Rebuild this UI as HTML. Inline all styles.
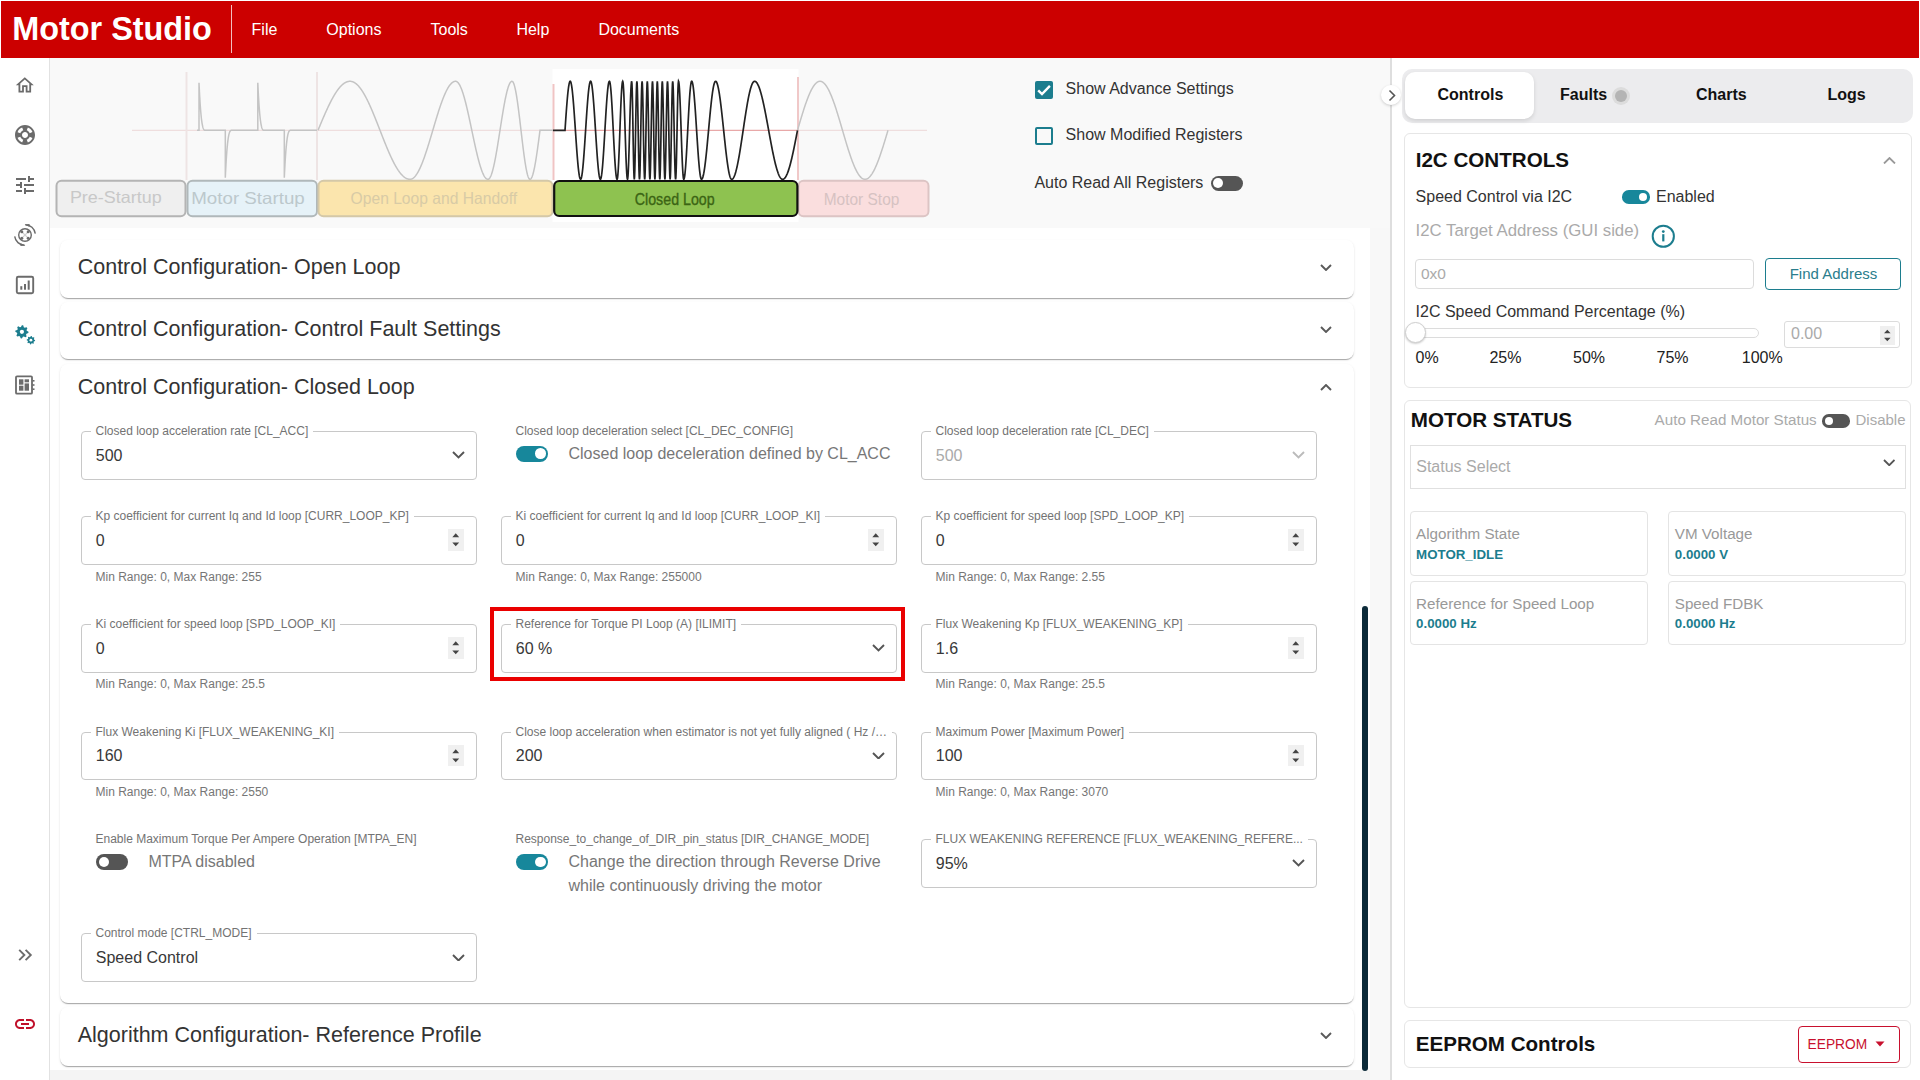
<!DOCTYPE html>
<html><head><meta charset="utf-8"><title>Motor Studio</title>
<style>
html,body{margin:0;padding:0;width:1920px;height:1080px;overflow:hidden;background:#fff;font-family:"Liberation Sans",sans-serif}
.t{position:absolute;line-height:1;white-space:nowrap}
.r{position:absolute;display:block}
svg text{font-family:"Liberation Sans",sans-serif}
</style></head><body>
<div class="r" style="left:1.00px;top:1.00px;width:1918.00px;height:57.00px;background:#cc0000"></div>
<div class="t" style="left:12.20px;top:13.37px;font-size:32.4px;color:#fff;font-weight:700;">Motor Studio</div>
<div class="r" style="left:231.00px;top:5.00px;width:1.00px;height:48.00px;background:rgba(255,255,255,0.75)"></div>
<div class="t" style="left:251.60px;top:22.25px;font-size:16px;color:#fff;font-weight:400;">File</div>
<div class="t" style="left:326.30px;top:22.25px;font-size:16px;color:#fff;font-weight:400;">Options</div>
<div class="t" style="left:430.50px;top:22.25px;font-size:16px;color:#fff;font-weight:400;">Tools</div>
<div class="t" style="left:516.40px;top:22.25px;font-size:16px;color:#fff;font-weight:400;">Help</div>
<div class="t" style="left:598.40px;top:22.25px;font-size:16px;color:#fff;font-weight:400;">Documents</div>
<div class="r" style="left:49.00px;top:58.00px;width:1.00px;height:1022.00px;background:#e2e2e2"></div>
<div class="r" style="left:50.00px;top:58.00px;width:1340.00px;height:170.00px;background:#f9f9f9"></div>
<div class="r" style="left:50.00px;top:228.00px;width:1320.00px;height:842.00px;background:#fff"></div>
<div class="r" style="left:1370.00px;top:228.00px;width:20.00px;height:852.00px;background:#f8f8f8"></div>
<div class="r" style="left:50.00px;top:1070.00px;width:1320.00px;height:10.00px;background:#f4f4f4"></div>
<svg class="r" style="left:0;top:0" width="1400" height="240" viewBox="0 0 1400 240"><rect x="552.5" y="69" width="246" height="153" fill="#ffffff"/><line x1="132" y1="130.3" x2="553" y2="130.3" stroke="#efdede" stroke-width="1.3"/><line x1="553" y1="130.3" x2="798" y2="130.3" stroke="#e8a8a8" stroke-width="1.3"/><line x1="798" y1="130.3" x2="927" y2="130.3" stroke="#efdede" stroke-width="1.3"/><line x1="186.5" y1="72" x2="186.5" y2="180" stroke="#eee4e4" stroke-width="2"/><line x1="317" y1="72" x2="317" y2="180" stroke="#eee4e4" stroke-width="2"/><line x1="553.5" y1="84" x2="553.5" y2="180" stroke="#f0c4c4" stroke-width="2"/><line x1="798" y1="77" x2="798" y2="180" stroke="#f0c8c8" stroke-width="2"/><path d="M197.00,130.30 L199.00,130.30 L199.00,82.80 L199.22,87.39 L199.43,91.68 L199.65,95.67 L199.87,99.38 L200.08,102.81 L200.30,105.98 L200.52,108.90 L200.73,111.57 L200.95,114.01 L201.17,116.23 L201.38,118.23 L201.60,120.04 L201.82,121.66 L202.03,123.09 L202.25,124.36 L202.47,125.47 L202.68,126.43 L202.90,127.26 L203.12,127.96 L203.33,128.54 L203.55,129.02 L203.77,129.40 L203.98,129.70 L204.20,129.92 L204.42,130.08 L204.63,130.19 L204.85,130.25 L205.07,130.29 L205.28,130.30 L205.50,130.30 L225.30,130.30 L225.30,177.80 L225.52,173.21 L225.73,168.92 L225.95,164.93 L226.17,161.22 L226.38,157.79 L226.60,154.62 L226.82,151.70 L227.03,149.03 L227.25,146.59 L227.47,144.37 L227.68,142.37 L227.90,140.56 L228.12,138.94 L228.33,137.51 L228.55,136.24 L228.77,135.13 L228.98,134.17 L229.20,133.34 L229.42,132.64 L229.63,132.06 L229.85,131.58 L230.07,131.20 L230.28,130.90 L230.50,130.68 L230.72,130.52 L230.93,130.41 L231.15,130.35 L231.37,130.31 L231.58,130.30 L231.80,130.30 L257.80,130.30 L257.80,82.80 L258.02,87.39 L258.23,91.68 L258.45,95.67 L258.67,99.38 L258.88,102.81 L259.10,105.98 L259.32,108.90 L259.53,111.57 L259.75,114.01 L259.97,116.23 L260.18,118.23 L260.40,120.04 L260.62,121.66 L260.83,123.09 L261.05,124.36 L261.27,125.47 L261.48,126.43 L261.70,127.26 L261.92,127.96 L262.13,128.54 L262.35,129.02 L262.57,129.40 L262.78,129.70 L263.00,129.92 L263.22,130.08 L263.43,130.19 L263.65,130.25 L263.87,130.29 L264.08,130.30 L264.30,130.30 L284.30,130.30 L284.30,177.80 L284.52,173.21 L284.73,168.92 L284.95,164.93 L285.17,161.22 L285.38,157.79 L285.60,154.62 L285.82,151.70 L286.03,149.03 L286.25,146.59 L286.47,144.37 L286.68,142.37 L286.90,140.56 L287.12,138.94 L287.33,137.51 L287.55,136.24 L287.77,135.13 L287.98,134.17 L288.20,133.34 L288.42,132.64 L288.63,132.06 L288.85,131.58 L289.07,131.20 L289.28,130.90 L289.50,130.68 L289.72,130.52 L289.93,130.41 L290.15,130.35 L290.37,130.31 L290.58,130.30 L290.80,130.30 L317.00,130.30" fill="none" stroke="#c4c4c4" stroke-width="1.5"/><path d="M318.00,130.30 L318.25,129.70 L318.50,129.10 L318.75,128.50 L319.00,127.90 L319.25,127.30 L319.50,126.70 L319.75,126.10 L320.00,125.50 L320.25,124.90 L320.50,124.30 L320.75,123.71 L321.00,123.11 L321.25,122.52 L321.50,121.92 L321.75,121.33 L322.00,120.74 L322.25,120.15 L322.50,119.56 L322.75,118.98 L323.00,118.39 L323.25,117.81 L323.50,117.23 L323.75,116.65 L324.00,116.08 L324.25,115.50 L324.50,114.93 L324.75,114.36 L325.00,113.79 L325.25,113.23 L325.50,112.67 L325.75,112.11 L326.00,111.55 L326.25,110.99 L326.50,110.44 L326.75,109.89 L327.00,109.35 L327.25,108.81 L327.50,108.27 L327.75,107.73 L328.00,107.20 L328.25,106.67 L328.50,106.15 L328.75,105.63 L329.00,105.11 L329.25,104.60 L329.50,104.09 L329.75,103.58 L330.00,103.08 L330.25,102.58 L330.50,102.09 L330.75,101.60 L331.00,101.11 L331.25,100.63 L331.50,100.15 L331.75,99.68 L332.00,99.21 L332.25,98.75 L332.50,98.29 L332.75,97.84 L333.00,97.39 L333.25,96.95 L333.50,96.51 L333.75,96.08 L334.00,95.65 L334.25,95.23 L334.50,94.81 L334.75,94.40 L335.00,93.99 L335.25,93.59 L335.50,93.20 L335.75,92.81 L336.00,92.42 L336.25,92.04 L336.50,91.67 L336.75,91.30 L337.00,90.94 L337.25,90.59 L337.50,90.24 L337.75,89.90 L338.00,89.56 L338.25,89.23 L338.50,88.90 L338.75,88.58 L339.00,88.27 L339.25,87.97 L339.50,87.67 L339.75,87.37 L340.00,87.09 L340.25,86.81 L340.50,86.53 L340.75,86.26 L341.00,86.00 L341.25,85.75 L341.50,85.50 L341.75,85.26 L342.00,85.03 L342.25,84.80 L342.50,84.58 L342.75,84.37 L343.00,84.16 L343.25,83.97 L343.50,83.77 L343.75,83.59 L344.00,83.41 L344.25,83.24 L344.50,83.07 L344.75,82.92 L345.00,82.77 L345.25,82.63 L345.50,82.49 L345.75,82.36 L346.00,82.24 L346.25,82.13 L346.50,82.02 L346.75,81.92 L347.00,81.83 L347.25,81.75 L347.50,81.67 L347.75,81.60 L348.00,81.54 L348.25,81.48 L348.50,81.43 L348.75,81.39 L349.00,81.36 L349.25,81.33 L349.50,81.31 L349.75,81.30 L350.00,81.30 L350.25,81.30 L350.50,81.32 L350.75,81.34 L351.00,81.37 L351.25,81.40 L351.50,81.45 L351.75,81.51 L352.00,81.57 L352.25,81.64 L352.50,81.72 L352.75,81.81 L353.00,81.90 L353.25,82.01 L353.50,82.12 L353.75,82.24 L354.00,82.37 L354.25,82.51 L354.50,82.65 L354.75,82.81 L355.00,82.97 L355.25,83.14 L355.50,83.32 L355.75,83.50 L356.00,83.70 L356.25,83.90 L356.50,84.11 L356.75,84.33 L357.00,84.55 L357.25,84.79 L357.50,85.03 L357.75,85.28 L358.00,85.54 L358.25,85.80 L358.50,86.07 L358.75,86.35 L359.00,86.64 L359.25,86.94 L359.50,87.24 L359.75,87.55 L360.00,87.86 L360.25,88.19 L360.50,88.52 L360.75,88.86 L361.00,89.21 L361.25,89.56 L361.50,89.92 L361.75,90.28 L362.00,90.66 L362.25,91.04 L362.50,91.43 L362.75,91.82 L363.00,92.22 L363.25,92.63 L363.50,93.04 L363.75,93.46 L364.00,93.89 L364.25,94.32 L364.50,94.76 L364.75,95.20 L365.00,95.65 L365.25,96.11 L365.50,96.57 L365.75,97.04 L366.00,97.51 L366.25,97.99 L366.50,98.48 L366.75,98.97 L367.00,99.46 L367.25,99.96 L367.50,100.47 L367.75,100.98 L368.00,101.50 L368.25,102.02 L368.50,102.55 L368.75,103.08 L369.00,103.61 L369.25,104.15 L369.50,104.70 L369.75,105.25 L370.00,105.80 L370.25,106.36 L370.50,106.92 L370.75,107.48 L371.00,108.05 L371.25,108.63 L371.50,109.20 L371.75,109.79 L372.00,110.37 L372.25,110.96 L372.50,111.55 L372.75,112.14 L373.00,112.74 L373.25,113.34 L373.50,113.94 L373.75,114.55 L374.00,115.16 L374.25,115.77 L374.50,116.38 L374.75,117.00 L375.00,117.62 L375.25,118.24 L375.50,118.86 L375.75,119.49 L376.00,120.11 L376.25,120.74 L376.50,121.37 L376.75,122.00 L377.00,122.63 L377.25,123.27 L377.50,123.90 L377.75,124.54 L378.00,125.18 L378.25,125.82 L378.50,126.46 L378.75,127.10 L379.00,127.74 L379.25,128.38 L379.50,129.02 L379.75,129.66 L380.00,130.30 L380.25,130.94 L380.50,131.58 L380.75,132.22 L381.00,132.86 L381.25,133.50 L381.50,134.14 L381.75,134.78 L382.00,135.42 L382.25,136.06 L382.50,136.70 L382.75,137.33 L383.00,137.97 L383.25,138.60 L383.50,139.23 L383.75,139.86 L384.00,140.49 L384.25,141.11 L384.50,141.74 L384.75,142.36 L385.00,142.98 L385.25,143.60 L385.50,144.22 L385.75,144.83 L386.00,145.44 L386.25,146.05 L386.50,146.66 L386.75,147.26 L387.00,147.86 L387.25,148.46 L387.50,149.05 L387.75,149.64 L388.00,150.23 L388.25,150.81 L388.50,151.40 L388.75,151.97 L389.00,152.55 L389.25,153.12 L389.50,153.68 L389.75,154.24 L390.00,154.80 L390.25,155.35 L390.50,155.90 L390.75,156.45 L391.00,156.99 L391.25,157.52 L391.50,158.05 L391.75,158.58 L392.00,159.10 L392.25,159.62 L392.50,160.13 L392.75,160.64 L393.00,161.14 L393.25,161.63 L393.50,162.12 L393.75,162.61 L394.00,163.09 L394.25,163.56 L394.50,164.03 L394.75,164.49 L395.00,164.95 L395.25,165.40 L395.50,165.84 L395.75,166.28 L396.00,166.71 L396.25,167.14 L396.50,167.56 L396.75,167.97 L397.00,168.38 L397.25,168.78 L397.50,169.17 L397.75,169.56 L398.00,169.94 L398.25,170.32 L398.50,170.68 L398.75,171.04 L399.00,171.39 L399.25,171.74 L399.50,172.08 L399.75,172.41 L400.00,172.74 L400.25,173.05 L400.50,173.36 L400.75,173.66 L401.00,173.96 L401.25,174.25 L401.50,174.53 L401.75,174.80 L402.00,175.06 L402.25,175.32 L402.50,175.57 L402.75,175.81 L403.00,176.05 L403.25,176.27 L403.50,176.49 L403.75,176.70 L404.00,176.90 L404.25,177.10 L404.50,177.28 L404.75,177.46 L405.00,177.63 L405.25,177.79 L405.50,177.95 L405.75,178.09 L406.00,178.23 L406.25,178.36 L406.50,178.48 L406.75,178.59 L407.00,178.70 L407.25,178.79 L407.50,178.88 L407.75,178.96 L408.00,179.03 L408.25,179.09 L408.50,179.15 L408.75,179.20 L409.00,179.23 L409.25,179.26 L409.50,179.28 L409.75,179.30 L410.00,179.30 L410.25,179.29 L410.50,179.27 L410.75,179.23 L411.00,179.18 L411.25,179.12 L411.50,179.04 L411.75,178.94 L412.00,178.83 L412.25,178.71 L412.51,178.57 L412.76,178.42 L413.01,178.25 L413.26,178.07 L413.51,177.88 L413.76,177.67 L414.01,177.44 L414.26,177.21 L414.51,176.95 L414.76,176.69 L415.01,176.41 L415.26,176.12 L415.51,175.81 L415.76,175.49 L416.01,175.15 L416.26,174.81 L416.51,174.45 L416.76,174.07 L417.02,173.69 L417.27,173.29 L417.52,172.88 L417.77,172.45 L418.02,172.01 L418.27,171.56 L418.52,171.10 L418.77,170.63 L419.02,170.14 L419.27,169.64 L419.52,169.13 L419.77,168.61 L420.02,168.08 L420.27,167.53 L420.52,166.98 L420.77,166.41 L421.02,165.83 L421.27,165.25 L421.53,164.65 L421.78,164.04 L422.03,163.42 L422.28,162.79 L422.53,162.16 L422.78,161.51 L423.03,160.85 L423.28,160.19 L423.53,159.51 L423.78,158.83 L424.03,158.14 L424.28,157.43 L424.53,156.73 L424.78,156.01 L425.03,155.29 L425.28,154.56 L425.53,153.82 L425.78,153.07 L426.04,152.32 L426.29,151.56 L426.54,150.80 L426.79,150.02 L427.04,149.25 L427.29,148.46 L427.54,147.68 L427.79,146.88 L428.04,146.08 L428.29,145.28 L428.54,144.47 L428.79,143.66 L429.04,142.85 L429.29,142.03 L429.54,141.20 L429.79,140.38 L430.04,139.55 L430.29,138.72 L430.55,137.88 L430.80,137.05 L431.05,136.21 L431.30,135.37 L431.55,134.52 L431.80,133.68 L432.05,132.84 L432.30,131.99 L432.55,131.15 L432.80,130.30 L433.05,129.45 L433.30,128.61 L433.55,127.76 L433.80,126.92 L434.05,126.08 L434.30,125.23 L434.55,124.39 L434.80,123.55 L435.05,122.72 L435.31,121.88 L435.56,121.05 L435.81,120.22 L436.06,119.40 L436.31,118.57 L436.56,117.75 L436.81,116.94 L437.06,116.13 L437.31,115.32 L437.56,114.52 L437.81,113.72 L438.06,112.92 L438.31,112.14 L438.56,111.35 L438.81,110.58 L439.06,109.80 L439.31,109.04 L439.56,108.28 L439.82,107.53 L440.07,106.78 L440.32,106.04 L440.57,105.31 L440.82,104.59 L441.07,103.87 L441.32,103.17 L441.57,102.46 L441.82,101.77 L442.07,101.09 L442.32,100.41 L442.57,99.75 L442.82,99.09 L443.07,98.44 L443.32,97.81 L443.57,97.18 L443.82,96.56 L444.07,95.95 L444.33,95.35 L444.58,94.77 L444.83,94.19 L445.08,93.62 L445.33,93.07 L445.58,92.52 L445.83,91.99 L446.08,91.47 L446.33,90.96 L446.58,90.46 L446.83,89.97 L447.08,89.50 L447.33,89.04 L447.58,88.59 L447.83,88.15 L448.08,87.72 L448.33,87.31 L448.58,86.91 L448.84,86.53 L449.09,86.15 L449.34,85.79 L449.59,85.45 L449.84,85.11 L450.09,84.79 L450.34,84.48 L450.59,84.19 L450.84,83.91 L451.09,83.65 L451.34,83.39 L451.59,83.16 L451.84,82.93 L452.09,82.72 L452.34,82.53 L452.59,82.35 L452.84,82.18 L453.09,82.03 L453.35,81.89 L453.60,81.77 L453.85,81.66 L454.10,81.56 L454.35,81.48 L454.60,81.42 L454.85,81.37 L455.10,81.33 L455.35,81.31 L455.60,81.30 L455.85,81.31 L456.10,81.36 L456.35,81.43 L456.60,81.53 L456.86,81.66 L457.11,81.82 L457.36,82.01 L457.61,82.23 L457.86,82.47 L458.11,82.75 L458.36,83.05 L458.61,83.38 L458.87,83.74 L459.12,84.12 L459.37,84.53 L459.62,84.97 L459.87,85.44 L460.12,85.93 L460.37,86.45 L460.62,87.00 L460.87,87.57 L461.13,88.17 L461.38,88.79 L461.63,89.43 L461.88,90.10 L462.13,90.80 L462.38,91.52 L462.63,92.26 L462.88,93.02 L463.13,93.81 L463.39,94.61 L463.64,95.44 L463.89,96.29 L464.14,97.16 L464.39,98.05 L464.64,98.96 L464.89,99.88 L465.14,100.83 L465.40,101.79 L465.65,102.77 L465.90,103.76 L466.15,104.77 L466.40,105.80 L466.65,106.84 L466.90,107.90 L467.15,108.96 L467.40,110.04 L467.66,111.14 L467.91,112.24 L468.16,113.35 L468.41,114.48 L468.66,115.61 L468.91,116.76 L469.16,117.91 L469.41,119.06 L469.67,120.23 L469.92,121.40 L470.17,122.58 L470.42,123.76 L470.67,124.94 L470.92,126.13 L471.17,127.32 L471.42,128.51 L471.67,129.70 L471.93,130.90 L472.18,132.09 L472.43,133.28 L472.68,134.47 L472.93,135.66 L473.18,136.84 L473.43,138.02 L473.68,139.20 L473.93,140.37 L474.19,141.54 L474.44,142.69 L474.69,143.84 L474.94,144.99 L475.19,146.12 L475.44,147.25 L475.69,148.36 L475.94,149.46 L476.20,150.56 L476.45,151.64 L476.70,152.70 L476.95,153.76 L477.20,154.80 L477.45,155.83 L477.70,156.84 L477.95,157.83 L478.20,158.81 L478.46,159.77 L478.71,160.72 L478.96,161.64 L479.21,162.55 L479.46,163.44 L479.71,164.31 L479.96,165.16 L480.21,165.99 L480.47,166.79 L480.72,167.58 L480.97,168.34 L481.22,169.08 L481.47,169.80 L481.72,170.50 L481.97,171.17 L482.22,171.81 L482.47,172.43 L482.73,173.03 L482.98,173.60 L483.23,174.15 L483.48,174.67 L483.73,175.16 L483.98,175.63 L484.23,176.07 L484.48,176.48 L484.73,176.86 L484.99,177.22 L485.24,177.55 L485.49,177.85 L485.74,178.13 L485.99,178.37 L486.24,178.59 L486.49,178.78 L486.74,178.94 L487.00,179.07 L487.25,179.17 L487.50,179.24 L487.75,179.29 L488.00,179.30 L488.25,179.27 L488.50,179.20 L488.75,179.06 L489.00,178.88 L489.25,178.65 L489.50,178.36 L489.75,178.02 L490.00,177.63 L490.25,177.19 L490.50,176.70 L490.75,176.16 L491.00,175.57 L491.25,174.93 L491.50,174.25 L491.75,173.51 L492.00,172.74 L492.25,171.91 L492.50,171.04 L492.75,170.13 L493.00,169.17 L493.25,168.18 L493.50,167.14 L493.75,166.06 L494.00,164.95 L494.25,163.80 L494.50,162.61 L494.75,161.39 L495.00,160.13 L495.25,158.84 L495.50,157.52 L495.75,156.18 L496.00,154.80 L496.25,153.40 L496.50,151.97 L496.75,150.52 L497.00,149.05 L497.25,147.56 L497.50,146.05 L497.75,144.52 L498.00,142.98 L498.25,141.43 L498.50,139.86 L498.75,138.28 L499.00,136.70 L499.25,135.10 L499.50,133.50 L499.75,131.90 L500.00,130.30 L500.25,128.70 L500.50,127.10 L500.75,125.50 L501.00,123.90 L501.25,122.32 L501.50,120.74 L501.75,119.17 L502.00,117.62 L502.25,116.08 L502.50,114.55 L502.75,113.04 L503.00,111.55 L503.25,110.08 L503.50,108.63 L503.75,107.20 L504.00,105.80 L504.25,104.42 L504.50,103.08 L504.75,101.76 L505.00,100.47 L505.25,99.21 L505.50,97.99 L505.75,96.80 L506.00,95.65 L506.25,94.54 L506.50,93.46 L506.75,92.42 L507.00,91.43 L507.25,90.47 L507.50,89.56 L507.75,88.69 L508.00,87.86 L508.25,87.09 L508.50,86.35 L508.75,85.67 L509.00,85.03 L509.25,84.44 L509.50,83.90 L509.75,83.41 L510.00,82.97 L510.25,82.58 L510.50,82.24 L510.75,81.95 L511.00,81.72 L511.25,81.54 L511.50,81.40 L511.75,81.33 L512.00,81.30 L512.25,81.35 L512.50,81.49 L512.75,81.72 L513.00,82.04 L513.25,82.46 L513.50,82.97 L513.75,83.57 L514.00,84.26 L514.25,85.03 L514.50,85.89 L514.75,86.84 L515.00,87.86 L515.25,88.97 L515.50,90.16 L515.75,91.43 L516.00,92.76 L516.25,94.17 L516.50,95.65 L516.75,97.20 L517.00,98.80 L517.25,100.47 L517.50,102.19 L517.75,103.97 L518.00,105.80 L518.25,107.67 L518.50,109.59 L518.75,111.55 L519.00,113.54 L519.25,115.57 L519.50,117.62 L519.75,119.69 L520.00,121.79 L520.25,123.90 L520.50,126.03 L520.75,128.16 L521.00,130.30 L521.25,132.44 L521.50,134.57 L521.75,136.70 L522.00,138.81 L522.25,140.91 L522.50,142.98 L522.75,145.03 L523.00,147.06 L523.25,149.05 L523.50,151.01 L523.75,152.93 L524.00,154.80 L524.25,156.63 L524.50,158.41 L524.75,160.13 L525.00,161.80 L525.25,163.40 L525.50,164.95 L525.75,166.43 L526.00,167.84 L526.25,169.17 L526.50,170.44 L526.75,171.63 L527.00,172.74 L527.25,173.76 L527.50,174.71 L527.75,175.57 L528.00,176.34 L528.25,177.03 L528.50,177.63 L528.75,178.14 L529.00,178.56 L529.25,178.88 L529.50,179.11 L529.75,179.25 L530.00,179.30 L530.25,179.26 L530.50,179.15 L530.75,178.96 L531.00,178.70 L531.25,178.36 L531.50,177.95 L531.75,177.46 L532.00,176.90 L532.25,176.27 L532.50,175.57 L532.75,174.80 L533.00,173.96 L533.25,173.05 L533.50,172.08 L533.75,171.04 L534.00,169.94 L534.25,168.78 L534.50,167.56 L534.75,166.28 L535.00,164.95 L535.25,163.56 L535.50,162.12 L535.75,160.64 L536.00,159.10 L536.25,157.52 L536.50,155.90 L536.75,154.24 L537.00,152.55 L537.25,150.81 L537.50,149.05 L537.75,147.26 L538.00,145.44 L538.25,143.60 L538.50,141.74 L538.75,139.86 L539.00,137.97 L539.25,136.06 L539.50,134.14 L539.75,132.22 L540.00,130.30 L553.00,130.30" fill="none" stroke="#c4c4c4" stroke-width="1.5"/><path d="M797.50,130.30 L797.75,129.44 L798.00,128.59 L798.25,127.74 L798.50,126.88 L798.75,126.03 L799.00,125.18 L799.25,124.33 L799.50,123.48 L799.75,122.63 L800.00,121.79 L800.25,120.95 L800.50,120.11 L800.75,119.28 L801.00,118.45 L801.25,117.62 L801.50,116.79 L801.75,115.97 L802.00,115.16 L802.25,114.35 L802.50,113.54 L802.75,112.74 L803.00,111.94 L803.25,111.15 L803.50,110.37 L803.75,109.59 L804.00,108.82 L804.25,108.05 L804.50,107.30 L804.75,106.54 L805.00,105.80 L805.25,105.06 L805.50,104.33 L805.75,103.61 L806.00,102.90 L806.25,102.19 L806.50,101.50 L806.75,100.81 L807.00,100.13 L807.25,99.46 L807.50,98.80 L807.75,98.15 L808.00,97.51 L808.25,96.88 L808.50,96.26 L808.75,95.65 L809.00,95.05 L809.25,94.46 L809.50,93.89 L809.75,93.32 L810.00,92.76 L810.25,92.22 L810.50,91.69 L810.75,91.17 L811.00,90.66 L811.25,90.16 L811.50,89.68 L811.75,89.21 L812.00,88.75 L812.25,88.30 L812.50,87.86 L812.75,87.44 L813.00,87.04 L813.25,86.64 L813.50,86.26 L813.75,85.89 L814.00,85.54 L814.25,85.20 L814.50,84.87 L814.75,84.55 L815.00,84.26 L815.25,83.97 L815.50,83.70 L815.75,83.44 L816.00,83.20 L816.25,82.97 L816.50,82.76 L816.75,82.56 L817.00,82.37 L817.25,82.20 L817.50,82.04 L817.75,81.90 L818.00,81.78 L818.25,81.67 L818.50,81.57 L818.75,81.49 L819.00,81.42 L819.25,81.37 L819.50,81.33 L819.75,81.31 L820.00,81.30 L820.25,81.31 L820.50,81.33 L820.75,81.37 L821.00,81.42 L821.25,81.49 L821.50,81.57 L821.75,81.67 L822.00,81.78 L822.25,81.90 L822.50,82.04 L822.75,82.20 L823.00,82.37 L823.25,82.56 L823.50,82.76 L823.75,82.97 L824.00,83.20 L824.25,83.44 L824.50,83.70 L824.75,83.97 L825.00,84.26 L825.25,84.55 L825.50,84.87 L825.75,85.20 L826.00,85.54 L826.25,85.89 L826.50,86.26 L826.75,86.64 L827.00,87.04 L827.25,87.44 L827.50,87.86 L827.75,88.30 L828.00,88.75 L828.25,89.21 L828.50,89.68 L828.75,90.16 L829.00,90.66 L829.25,91.17 L829.50,91.69 L829.75,92.22 L830.00,92.76 L830.25,93.32 L830.50,93.89 L830.75,94.46 L831.00,95.05 L831.25,95.65 L831.50,96.26 L831.75,96.88 L832.00,97.51 L832.25,98.15 L832.50,98.80 L832.75,99.46 L833.00,100.13 L833.25,100.81 L833.50,101.50 L833.75,102.19 L834.00,102.90 L834.25,103.61 L834.50,104.33 L834.75,105.06 L835.00,105.80 L835.25,106.54 L835.50,107.30 L835.75,108.05 L836.00,108.82 L836.25,109.59 L836.50,110.37 L836.75,111.15 L837.00,111.94 L837.25,112.74 L837.50,113.54 L837.75,114.35 L838.00,115.16 L838.25,115.97 L838.50,116.79 L838.75,117.62 L839.00,118.45 L839.25,119.28 L839.50,120.11 L839.75,120.95 L840.00,121.79 L840.25,122.63 L840.50,123.48 L840.75,124.33 L841.00,125.18 L841.25,126.03 L841.50,126.88 L841.75,127.74 L842.00,128.59 L842.25,129.44 L842.50,130.30 L842.75,131.16 L843.00,132.01 L843.25,132.86 L843.50,133.72 L843.75,134.57 L844.00,135.42 L844.25,136.27 L844.50,137.12 L844.75,137.97 L845.00,138.81 L845.25,139.65 L845.50,140.49 L845.75,141.32 L846.00,142.15 L846.25,142.98 L846.50,143.81 L846.75,144.63 L847.00,145.44 L847.25,146.25 L847.50,147.06 L847.75,147.86 L848.00,148.66 L848.25,149.45 L848.50,150.23 L848.75,151.01 L849.00,151.78 L849.25,152.55 L849.50,153.30 L849.75,154.06 L850.00,154.80 L850.25,155.54 L850.50,156.27 L850.75,156.99 L851.00,157.70 L851.25,158.41 L851.50,159.10 L851.75,159.79 L852.00,160.47 L852.25,161.14 L852.50,161.80 L852.75,162.45 L853.00,163.09 L853.25,163.72 L853.50,164.34 L853.75,164.95 L854.00,165.55 L854.25,166.14 L854.50,166.71 L854.75,167.28 L855.00,167.84 L855.25,168.38 L855.50,168.91 L855.75,169.43 L856.00,169.94 L856.25,170.44 L856.50,170.92 L856.75,171.39 L857.00,171.85 L857.25,172.30 L857.50,172.74 L857.75,173.16 L858.00,173.56 L858.25,173.96 L858.50,174.34 L858.75,174.71 L859.00,175.06 L859.25,175.40 L859.50,175.73 L859.75,176.05 L860.00,176.34 L860.25,176.63 L860.50,176.90 L860.75,177.16 L861.00,177.40 L861.25,177.63 L861.50,177.84 L861.75,178.04 L862.00,178.23 L862.25,178.40 L862.50,178.56 L862.75,178.70 L863.00,178.82 L863.25,178.93 L863.50,179.03 L863.75,179.11 L864.00,179.18 L864.25,179.23 L864.50,179.27 L864.75,179.29 L865.00,179.30 L865.25,179.29 L865.50,179.27 L865.75,179.24 L866.00,179.19 L866.25,179.12 L866.50,179.04 L866.75,178.95 L867.00,178.84 L867.25,178.72 L867.50,178.59 L867.75,178.44 L868.00,178.28 L868.25,178.10 L868.50,177.91 L868.75,177.70 L869.00,177.48 L869.25,177.25 L869.50,177.00 L869.75,176.74 L870.00,176.47 L870.25,176.18 L870.50,175.88 L870.75,175.57 L871.00,175.24 L871.25,174.90 L871.50,174.55 L871.75,174.18 L872.00,173.81 L872.25,173.42 L872.50,173.01 L872.75,172.60 L873.00,172.17 L873.25,171.73 L873.50,171.27 L873.75,170.81 L874.00,170.33 L874.25,169.84 L874.50,169.34 L874.75,168.83 L875.00,168.31 L875.25,167.78 L875.50,167.23 L875.75,166.68 L876.00,166.11 L876.25,165.53 L876.50,164.95 L876.75,164.35 L877.00,163.75 L877.25,163.13 L877.50,162.50 L877.75,161.87 L878.00,161.22 L878.25,160.57 L878.50,159.91 L878.75,159.24 L879.00,158.56 L879.25,157.87 L879.50,157.17 L879.75,156.47 L880.00,155.76 L880.25,155.04 L880.50,154.32 L880.75,153.58 L881.00,152.84 L881.25,152.10 L881.50,151.34 L881.75,150.59 L882.00,149.82 L882.25,149.05 L882.50,148.28 L882.75,147.49 L883.00,146.71 L883.25,145.92 L883.50,145.12 L883.75,144.32 L884.00,143.52 L884.25,142.71 L884.50,141.90 L884.75,141.09 L885.00,140.27 L885.25,139.45 L885.50,138.63 L885.75,137.80 L886.00,136.97 L886.25,136.14 L886.50,135.31 L886.75,134.48 L887.00,133.64 L887.25,132.81 L887.50,131.97 L887.75,131.14 L888.00,130.30" fill="none" stroke="#c4c4c4" stroke-width="1.5"/><path d="M553.00,130.30 L565.00,130.30 L565.00,130.30 L565.26,126.46 L565.52,122.63 L565.78,118.86 L566.04,115.16 L566.30,111.55 L566.56,108.05 L566.82,104.70 L567.08,101.50 L567.34,98.48 L567.60,95.65 L567.86,93.04 L568.12,90.66 L568.38,88.52 L568.64,86.64 L568.90,85.03 L569.16,83.70 L569.42,82.65 L569.68,81.90 L569.94,81.45 L570.20,81.30 L570.45,81.44 L570.71,81.87 L570.96,82.59 L571.21,83.58 L571.47,84.85 L571.72,86.39 L571.98,88.18 L572.23,90.22 L572.48,92.50 L572.74,94.99 L572.99,97.70 L573.24,100.59 L573.50,103.67 L573.75,106.89 L574.00,110.26 L574.26,113.74 L574.51,117.32 L574.77,120.97 L575.02,124.68 L575.27,128.42 L575.53,132.18 L575.78,135.92 L576.03,139.63 L576.29,143.28 L576.54,146.86 L576.80,150.34 L577.05,153.71 L577.30,156.93 L577.56,160.01 L577.81,162.90 L578.06,165.61 L578.32,168.10 L578.57,170.38 L578.82,172.42 L579.08,174.21 L579.33,175.75 L579.59,177.02 L579.84,178.01 L580.09,178.73 L580.35,179.16 L580.60,179.30 L580.85,179.15 L581.10,178.70 L581.35,177.95 L581.60,176.90 L581.85,175.57 L582.10,173.96 L582.35,172.08 L582.60,169.94 L582.85,167.56 L583.10,164.95 L583.35,162.12 L583.60,159.10 L583.85,155.90 L584.10,152.55 L584.35,149.05 L584.60,145.44 L584.85,141.74 L585.10,137.97 L585.35,134.14 L585.60,130.30 L585.85,126.46 L586.10,122.63 L586.35,118.86 L586.60,115.16 L586.85,111.55 L587.10,108.05 L587.35,104.70 L587.60,101.50 L587.85,98.48 L588.10,95.65 L588.35,93.04 L588.60,90.66 L588.85,88.52 L589.10,86.64 L589.35,85.03 L589.60,83.70 L589.85,82.65 L590.10,81.90 L590.35,81.45 L590.60,81.30 L590.85,81.46 L591.10,81.93 L591.35,82.72 L591.61,83.82 L591.86,85.22 L592.11,86.91 L592.36,88.89 L592.61,91.13 L592.86,93.62 L593.11,96.36 L593.36,99.31 L593.62,102.46 L593.87,105.80 L594.12,109.29 L594.37,112.92 L594.62,116.67 L594.87,120.50 L595.12,124.39 L595.37,128.33 L595.63,132.27 L595.88,136.21 L596.13,140.10 L596.38,143.93 L596.63,147.68 L596.88,151.31 L597.13,154.80 L597.38,158.14 L597.64,161.29 L597.89,164.24 L598.14,166.98 L598.39,169.47 L598.64,171.71 L598.89,173.69 L599.14,175.38 L599.39,176.78 L599.65,177.88 L599.90,178.67 L600.15,179.14 L600.40,179.30 L600.65,179.11 L600.90,178.56 L601.15,177.63 L601.40,176.34 L601.65,174.71 L601.90,172.74 L602.15,170.44 L602.40,167.84 L602.65,164.95 L602.90,161.80 L603.15,158.41 L603.40,154.80 L603.65,151.01 L603.90,147.06 L604.15,142.98 L604.40,138.81 L604.65,134.57 L604.90,130.30 L605.15,126.03 L605.40,121.79 L605.65,117.62 L605.90,113.54 L606.15,109.59 L606.40,105.80 L606.65,102.19 L606.90,98.80 L607.15,95.65 L607.40,92.76 L607.65,90.16 L607.90,87.86 L608.15,85.89 L608.40,84.26 L608.65,82.97 L608.90,82.04 L609.15,81.49 L609.40,81.30 L609.66,81.57 L609.91,82.37 L610.17,83.70 L610.43,85.54 L610.68,87.86 L610.94,90.66 L611.20,93.89 L611.45,97.51 L611.71,101.50 L611.97,105.80 L612.22,110.37 L612.48,115.16 L612.74,120.11 L612.99,125.18 L613.25,130.30 L613.51,135.42 L613.76,140.49 L614.02,145.44 L614.28,150.23 L614.53,154.80 L614.79,159.10 L615.05,163.09 L615.30,166.71 L615.56,169.94 L615.82,172.74 L616.07,175.06 L616.33,176.90 L616.59,178.23 L616.84,179.03 L617.10,179.30 L617.35,178.80 L617.61,177.32 L617.86,174.87 L618.12,171.52 L618.37,167.33 L618.63,162.39 L618.88,156.79 L619.14,150.66 L619.39,144.10 L619.65,137.27 L619.90,130.30 L620.15,123.33 L620.41,116.50 L620.66,109.94 L620.92,103.81 L621.17,98.21 L621.43,93.27 L621.68,89.08 L621.94,85.73 L622.19,83.28 L622.45,81.80 L622.70,81.30 L622.95,81.97 L623.21,83.95 L623.46,87.21 L623.71,91.63 L623.96,97.11 L624.22,103.50 L624.47,110.62 L624.72,118.27 L624.97,126.25 L625.23,134.35 L625.48,142.33 L625.73,149.98 L625.98,157.10 L626.24,163.49 L626.49,168.97 L626.74,173.39 L626.99,176.65 L627.25,178.63 L627.50,179.30 L627.76,178.36 L628.02,175.57 L628.29,171.04 L628.55,164.95 L628.81,157.52 L629.08,149.05 L629.34,139.86 L629.60,130.30 L629.86,120.74 L630.12,111.55 L630.39,103.08 L630.65,95.65 L630.91,89.56 L631.18,85.03 L631.44,82.24 L631.70,81.30 L631.96,83.70 L632.22,90.66 L632.48,101.50 L632.74,115.16 L633.00,130.30 L633.26,145.44 L633.52,159.10 L633.78,169.94 L634.04,176.90 L634.30,179.30 L634.56,176.90 L634.82,169.94 L635.08,159.10 L635.34,145.44 L635.60,130.30 L635.86,115.16 L636.12,101.50 L636.38,90.66 L636.64,83.70 L636.90,81.30 L637.16,83.70 L637.42,90.66 L637.68,101.50 L637.94,115.16 L638.20,130.30 L638.46,145.44 L638.72,159.10 L638.98,169.94 L639.24,176.90 L639.50,179.30 L639.76,176.90 L640.02,169.94 L640.28,159.10 L640.54,145.44 L640.80,130.30 L641.06,115.16 L641.32,101.50 L641.58,90.66 L641.84,83.70 L642.10,81.30 L642.36,83.70 L642.62,90.66 L642.88,101.50 L643.14,115.16 L643.40,130.30 L643.66,145.44 L643.92,159.10 L644.18,169.94 L644.44,176.90 L644.70,179.30 L644.96,176.90 L645.22,169.94 L645.48,159.10 L645.74,145.44 L646.00,130.30 L646.26,115.16 L646.52,101.50 L646.78,90.66 L647.04,83.70 L647.30,81.30 L647.56,83.70 L647.82,90.66 L648.08,101.50 L648.34,115.16 L648.60,130.30 L648.86,145.44 L649.12,159.10 L649.38,169.94 L649.64,176.90 L649.90,179.30 L650.16,176.90 L650.42,169.94 L650.68,159.10 L650.94,145.44 L651.20,130.30 L651.46,115.16 L651.72,101.50 L651.98,90.66 L652.24,83.70 L652.50,81.30 L652.77,84.26 L653.03,92.76 L653.30,105.80 L653.57,121.79 L653.83,138.81 L654.10,154.80 L654.37,167.84 L654.63,176.34 L654.90,179.30 L655.17,176.34 L655.43,167.84 L655.70,154.80 L655.97,138.81 L656.23,121.79 L656.50,105.80 L656.77,92.76 L657.03,84.26 L657.30,81.30 L657.55,83.70 L657.80,90.66 L658.05,101.50 L658.30,115.16 L658.55,130.30 L658.80,145.44 L659.05,159.10 L659.30,169.94 L659.55,176.90 L659.80,179.30 L660.05,176.90 L660.30,169.94 L660.55,159.10 L660.80,145.44 L661.05,130.30 L661.30,115.16 L661.55,101.50 L661.80,90.66 L662.05,83.70 L662.30,81.30 L662.56,83.70 L662.82,90.66 L663.08,101.50 L663.34,115.16 L663.60,130.30 L663.86,145.44 L664.12,159.10 L664.38,169.94 L664.64,176.90 L664.90,179.30 L665.16,176.90 L665.42,169.94 L665.68,159.10 L665.94,145.44 L666.20,130.30 L666.46,115.16 L666.72,101.50 L666.98,90.66 L667.24,83.70 L667.50,81.30 L667.76,83.70 L668.02,90.66 L668.28,101.50 L668.54,115.16 L668.80,130.30 L669.06,145.44 L669.32,159.10 L669.58,169.94 L669.84,176.90 L670.10,179.30 L670.36,176.90 L670.62,169.94 L670.88,159.10 L671.14,145.44 L671.40,130.30 L671.66,115.16 L671.92,101.50 L672.18,90.66 L672.44,83.70 L672.70,81.30 L672.96,83.28 L673.23,89.08 L673.49,98.21 L673.75,109.94 L674.02,123.33 L674.28,137.27 L674.55,150.66 L674.81,162.39 L675.07,171.52 L675.34,177.32 L675.60,179.30 L675.86,177.32 L676.13,171.52 L676.39,162.39 L676.65,150.66 L676.92,137.27 L677.18,123.33 L677.45,109.94 L677.71,98.21 L677.97,89.08 L678.24,83.28 L678.50,81.30 L678.75,81.85 L679.00,83.48 L679.25,86.15 L679.50,89.81 L679.75,94.38 L680.00,99.75 L680.25,105.80 L680.50,112.40 L680.75,119.40 L681.00,126.64 L681.25,133.96 L681.50,141.20 L681.75,148.20 L682.00,154.80 L682.25,160.85 L682.50,166.22 L682.75,170.79 L683.00,174.45 L683.25,177.12 L683.50,178.75 L683.75,179.30 L684.01,179.05 L684.26,178.30 L684.52,177.05 L684.78,175.33 L685.03,173.14 L685.29,170.52 L685.55,167.48 L685.80,164.06 L686.06,160.29 L686.31,156.22 L686.57,151.88 L686.83,147.32 L687.08,142.58 L687.34,137.72 L687.60,132.78 L687.85,127.82 L688.11,122.88 L688.37,118.02 L688.62,113.28 L688.88,108.72 L689.14,104.38 L689.39,100.31 L689.65,96.54 L689.90,93.12 L690.16,90.08 L690.42,87.46 L690.67,85.27 L690.93,83.55 L691.19,82.30 L691.44,81.55 L691.70,81.30 L691.95,81.46 L692.20,81.93 L692.45,82.72 L692.71,83.82 L692.96,85.22 L693.21,86.91 L693.46,88.89 L693.71,91.13 L693.96,93.62 L694.21,96.36 L694.46,99.31 L694.72,102.46 L694.97,105.80 L695.22,109.29 L695.47,112.92 L695.72,116.67 L695.97,120.50 L696.22,124.39 L696.47,128.33 L696.73,132.27 L696.98,136.21 L697.23,140.10 L697.48,143.93 L697.73,147.68 L697.98,151.31 L698.23,154.80 L698.48,158.14 L698.74,161.29 L698.99,164.24 L699.24,166.98 L699.49,169.47 L699.74,171.71 L699.99,173.69 L700.24,175.38 L700.49,176.78 L700.75,177.88 L701.00,178.67 L701.25,179.14 L701.50,179.30 L701.75,179.22 L702.00,178.99 L702.26,178.61 L702.51,178.07 L702.76,177.38 L703.01,176.55 L703.26,175.57 L703.51,174.45 L703.77,173.19 L704.02,171.79 L704.27,170.26 L704.52,168.61 L704.77,166.84 L705.02,164.95 L705.28,162.95 L705.53,160.85 L705.78,158.65 L706.03,156.37 L706.28,154.00 L706.54,151.56 L706.79,149.05 L707.04,146.48 L707.29,143.86 L707.54,141.20 L707.79,138.51 L708.05,135.79 L708.30,133.05 L708.55,130.30 L708.80,127.55 L709.05,124.81 L709.31,122.09 L709.56,119.40 L709.81,116.74 L710.06,114.12 L710.31,111.55 L710.56,109.04 L710.82,106.60 L711.07,104.23 L711.32,101.95 L711.57,99.75 L711.82,97.65 L712.08,95.65 L712.33,93.76 L712.58,91.99 L712.83,90.34 L713.08,88.81 L713.33,87.41 L713.59,86.15 L713.84,85.03 L714.09,84.05 L714.34,83.22 L714.59,82.53 L714.84,81.99 L715.10,81.61 L715.35,81.38 L715.60,81.30 L715.85,81.36 L716.10,81.54 L716.35,81.83 L716.61,82.24 L716.86,82.77 L717.11,83.41 L717.36,84.16 L717.61,85.03 L717.86,86.00 L718.12,87.09 L718.37,88.27 L718.62,89.56 L718.87,90.94 L719.12,92.42 L719.37,93.99 L719.62,95.65 L719.88,97.39 L720.13,99.21 L720.38,101.11 L720.63,103.08 L720.88,105.11 L721.13,107.20 L721.39,109.35 L721.64,111.55 L721.89,113.79 L722.14,116.08 L722.39,118.39 L722.64,120.74 L722.90,123.11 L723.15,125.50 L723.40,127.90 L723.65,130.30 L723.90,132.70 L724.15,135.10 L724.40,137.49 L724.66,139.86 L724.91,142.21 L725.16,144.52 L725.41,146.81 L725.66,149.05 L725.91,151.25 L726.17,153.40 L726.42,155.49 L726.67,157.52 L726.92,159.49 L727.17,161.39 L727.42,163.21 L727.68,164.95 L727.93,166.61 L728.18,168.18 L728.43,169.66 L728.68,171.04 L728.93,172.33 L729.18,173.51 L729.44,174.60 L729.69,175.57 L729.94,176.44 L730.19,177.19 L730.44,177.83 L730.69,178.36 L730.95,178.77 L731.20,179.06 L731.45,179.24 L731.70,179.30 L731.95,179.27 L732.20,179.18 L732.45,179.04 L732.71,178.83 L732.96,178.57 L733.21,178.25 L733.46,177.88 L733.71,177.44 L733.96,176.95 L734.22,176.41 L734.47,175.81 L734.72,175.15 L734.97,174.45 L735.22,173.69 L735.47,172.88 L735.73,172.01 L735.98,171.10 L736.23,170.14 L736.48,169.13 L736.73,168.08 L736.98,166.98 L737.24,165.83 L737.49,164.65 L737.74,163.42 L737.99,162.16 L738.24,160.85 L738.49,159.51 L738.75,158.14 L739.00,156.73 L739.25,155.29 L739.50,153.82 L739.75,152.32 L740.00,150.80 L740.26,149.25 L740.51,147.68 L740.76,146.08 L741.01,144.47 L741.26,142.85 L741.51,141.20 L741.77,139.55 L742.02,137.88 L742.27,136.21 L742.52,134.52 L742.77,132.84 L743.02,131.15 L743.28,129.45 L743.53,127.76 L743.78,126.08 L744.03,124.39 L744.28,122.72 L744.53,121.05 L744.79,119.40 L745.04,117.75 L745.29,116.13 L745.54,114.52 L745.79,112.92 L746.04,111.35 L746.30,109.80 L746.55,108.28 L746.80,106.78 L747.05,105.31 L747.30,103.87 L747.55,102.46 L747.81,101.09 L748.06,99.75 L748.31,98.44 L748.56,97.18 L748.81,95.95 L749.06,94.77 L749.32,93.62 L749.57,92.52 L749.82,91.47 L750.07,90.46 L750.32,89.50 L750.57,88.59 L750.83,87.72 L751.08,86.91 L751.33,86.15 L751.58,85.45 L751.83,84.79 L752.08,84.19 L752.34,83.65 L752.59,83.16 L752.84,82.72 L753.09,82.35 L753.34,82.03 L753.59,81.77 L753.85,81.56 L754.10,81.42 L754.35,81.33 L754.60,81.30 L754.85,81.32 L755.10,81.38 L755.35,81.47 L755.60,81.61 L755.85,81.78 L756.11,81.99 L756.36,82.24 L756.61,82.53 L756.86,82.85 L757.11,83.22 L757.36,83.61 L757.61,84.05 L757.86,84.52 L758.11,85.03 L758.36,85.57 L758.61,86.15 L758.87,86.77 L759.12,87.41 L759.37,88.10 L759.62,88.81 L759.87,89.56 L760.12,90.34 L760.37,91.15 L760.62,91.99 L760.87,92.86 L761.12,93.76 L761.37,94.69 L761.62,95.65 L761.88,96.64 L762.13,97.65 L762.38,98.69 L762.63,99.75 L762.88,100.84 L763.13,101.95 L763.38,103.08 L763.63,104.23 L763.88,105.40 L764.13,106.60 L764.38,107.81 L764.64,109.04 L764.89,110.29 L765.14,111.55 L765.39,112.83 L765.64,114.12 L765.89,115.42 L766.14,116.74 L766.39,118.06 L766.64,119.40 L766.89,120.74 L767.14,122.09 L767.40,123.45 L767.65,124.81 L767.90,126.18 L768.15,127.55 L768.40,128.93 L768.65,130.30 L768.90,131.67 L769.15,133.05 L769.40,134.42 L769.65,135.79 L769.90,137.15 L770.16,138.51 L770.41,139.86 L770.66,141.20 L770.91,142.54 L771.16,143.86 L771.41,145.18 L771.66,146.48 L771.91,147.77 L772.16,149.05 L772.41,150.31 L772.66,151.56 L772.92,152.79 L773.17,154.00 L773.42,155.20 L773.67,156.37 L773.92,157.52 L774.17,158.65 L774.42,159.76 L774.67,160.85 L774.92,161.91 L775.17,162.95 L775.42,163.96 L775.68,164.95 L775.93,165.91 L776.18,166.84 L776.43,167.74 L776.68,168.61 L776.93,169.45 L777.18,170.26 L777.43,171.04 L777.68,171.79 L777.93,172.50 L778.18,173.19 L778.43,173.83 L778.69,174.45 L778.94,175.03 L779.19,175.57 L779.44,176.08 L779.69,176.55 L779.94,176.99 L780.19,177.38 L780.44,177.75 L780.69,178.07 L780.94,178.36 L781.19,178.61 L781.45,178.82 L781.70,178.99 L781.95,179.13 L782.20,179.22 L782.45,179.28 L782.70,179.30 L782.95,179.28 L783.20,179.23 L783.45,179.14 L783.70,179.02 L783.95,178.87 L784.21,178.68 L784.46,178.45 L784.71,178.19 L784.96,177.90 L785.21,177.57 L785.46,177.21 L785.71,176.82 L785.96,176.39 L786.21,175.94 L786.46,175.44 L786.71,174.92 L786.96,174.37 L787.22,173.78 L787.47,173.16 L787.72,172.52 L787.97,171.84 L788.22,171.13 L788.47,170.40 L788.72,169.63 L788.97,168.84 L789.22,168.02 L789.47,167.18 L789.72,166.30 L789.97,165.41 L790.23,164.48 L790.48,163.54 L790.73,162.57 L790.98,161.57 L791.23,160.56 L791.48,159.52 L791.73,158.46 L791.98,157.39 L792.23,156.29 L792.48,155.18 L792.73,154.04 L792.98,152.89 L793.24,151.73 L793.49,150.55 L793.74,149.35 L793.99,148.14 L794.24,146.92 L794.49,145.69 L794.74,144.45 L794.99,143.19 L795.24,141.93 L795.49,140.66 L795.74,139.38 L795.99,138.09 L796.25,136.80 L796.50,135.51 L796.75,134.21 L797.00,132.91 L797.25,131.60 L797.50,130.30" fill="none" stroke="#222" stroke-width="1.7"/><rect x="56.5" y="180.8" width="129" height="35.4" rx="5" fill="#efefef" stroke="#b4b4b4" stroke-width="2"/><text x="69.9" y="202.7" font-size="16.5" fill="#c8c8c8" textLength="91.8" lengthAdjust="spacingAndGlyphs">Pre-Startup</text><rect x="187.5" y="180.8" width="129.5" height="35.4" rx="5" fill="#e6f2f8" stroke="#b0b8ba" stroke-width="2"/><text x="191.25" y="204.4" font-size="16.5" fill="#bcc8cc" textLength="113.5" lengthAdjust="spacingAndGlyphs">Motor Startup</text><rect x="318.5" y="180.8" width="234" height="35.4" rx="5" fill="#fbe5ad" stroke="#d4c8a8" stroke-width="2"/><text x="350.6" y="204.2" font-size="16.5" fill="#d8cba6" textLength="166.6" lengthAdjust="spacingAndGlyphs">Open Loop and Handoff</text><rect x="798.5" y="180.8" width="130" height="35.4" rx="5" fill="#fadede" stroke="#dcc4c4" stroke-width="2"/><text x="823.75" y="204.8" font-size="16.5" fill="#d6c2c2" textLength="75.6" lengthAdjust="spacingAndGlyphs">Motor Stop</text><rect x="554.2" y="181" width="243.2" height="35" rx="5" fill="#8ec250" stroke="#111" stroke-width="2.2"/><text x="634.8" y="204.8" font-size="16.5" fill="#3b6414" stroke="#3b6414" stroke-width="0.35" textLength="79.8" lengthAdjust="spacingAndGlyphs">Closed Loop</text></svg>
<svg class="r" style="left:1035px;top:80.5px" width="18" height="18" viewBox="0 0 18 18"><rect x="0" y="0" width="18" height="18" rx="2" fill="#1c7d8e"/><path d="M3.2 9.3 L7.0 13.0 L14.9 4.9" fill="none" stroke="#fff" stroke-width="2.4"/></svg>
<div class="t" style="left:1065.60px;top:81.05px;font-size:16px;color:#333;font-weight:400;">Show Advance Settings</div>
<div class="r" style="left:1035.00px;top:127.00px;width:18.00px;height:18.00px;border:2px solid #1c7d8e;border-radius:2px;box-sizing:border-box"></div>
<div class="t" style="left:1065.60px;top:127.45px;font-size:16px;color:#333;font-weight:400;">Show Modified Registers</div>
<div class="t" style="left:1034.40px;top:174.65px;font-size:16px;color:#333;font-weight:400;">Auto Read All Registers</div>
<div class="r" style="left:1210.60px;top:175.60px;width:32.00px;height:15.00px;background:#555;border-radius:7.5px"></div>
<div class="r" style="left:1213.20px;top:178.20px;width:9.80px;height:9.80px;background:#fff;border-radius:50%"></div>
<div class="r" style="left:60.00px;top:240.00px;width:1294.00px;height:57.50px;background:#fff;border-radius:8px;box-shadow:0 2px 1px -1px rgba(0,0,0,0.22),0 1px 1px 0 rgba(0,0,0,0.12),0 1px 3px 0 rgba(0,0,0,0.08)"></div>
<div class="t" style="left:77.70px;top:256.60px;font-size:21.5px;color:#333;font-weight:400;">Control Configuration- Open Loop</div>
<svg class="r" style="left:1319.80px;top:263.50px" width="12" height="7.0"><path d="M1 1 L6.0 6.0 L11 1" fill="none" stroke="#5a5a5a" stroke-width="1.9"/></svg>
<div class="r" style="left:60.00px;top:301.50px;width:1294.00px;height:57.50px;background:#fff;border-radius:8px;box-shadow:0 2px 1px -1px rgba(0,0,0,0.22),0 1px 1px 0 rgba(0,0,0,0.12),0 1px 3px 0 rgba(0,0,0,0.08)"></div>
<div class="t" style="left:77.70px;top:319.10px;font-size:21.5px;color:#333;font-weight:400;">Control Configuration- Control Fault Settings</div>
<svg class="r" style="left:1319.80px;top:325.50px" width="12" height="7.0"><path d="M1 1 L6.0 6.0 L11 1" fill="none" stroke="#5a5a5a" stroke-width="1.9"/></svg>
<div class="r" style="left:60.00px;top:363.50px;width:1294.00px;height:639.50px;background:#fff;border-radius:8px;box-shadow:0 2px 1px -1px rgba(0,0,0,0.22),0 1px 1px 0 rgba(0,0,0,0.12),0 1px 3px 0 rgba(0,0,0,0.08)"></div>
<div class="t" style="left:77.70px;top:376.90px;font-size:21.5px;color:#333;font-weight:400;">Control Configuration- Closed Loop</div>
<svg class="r" style="left:1319.80px;top:384.10px" width="12" height="7.0"><path d="M1 6.0 L6.0 1 L11 6.0" fill="none" stroke="#5a5a5a" stroke-width="1.9"/></svg>
<div class="r" style="left:60.00px;top:1007.00px;width:1294.00px;height:59.00px;background:#fff;border-radius:8px;box-shadow:0 2px 1px -1px rgba(0,0,0,0.22),0 1px 1px 0 rgba(0,0,0,0.12),0 1px 3px 0 rgba(0,0,0,0.08)"></div>
<div class="t" style="left:77.70px;top:1024.80px;font-size:21.5px;color:#333;font-weight:400;">Algorithm Configuration- Reference Profile</div>
<svg class="r" style="left:1319.60px;top:1032.10px" width="12" height="7.0"><path d="M1 1 L6.0 6.0 L11 1" fill="none" stroke="#5a5a5a" stroke-width="1.9"/></svg>
<div class="r" style="left:81.00px;top:431.20px;width:396.30px;height:48.80px;border:1px solid #c8c8c8;border-radius:4px;box-sizing:border-box"></div>
<div class="t" style="left:90.50px;top:424.20px;font-size:12px;line-height:14px;padding:0 5px;background:#fff;color:#737373">Closed loop acceleration rate [CL_ACC]</div>
<div class="t" style="left:95.80px;top:447.85px;font-size:16px;color:#383838;font-weight:400;">500</div>
<svg class="r" style="left:452.30px;top:451.45px" width="13" height="7.5"><path d="M1 1 L6.5 6.5 L12 1" fill="none" stroke="#555" stroke-width="1.9"/></svg>
<div class="t" style="left:515.50px;top:424.64px;font-size:12px;color:#737373;font-weight:400;">Closed loop deceleration select [CL_DEC_CONFIG]</div>
<div class="r" style="left:516.20px;top:445.80px;width:32.00px;height:15.80px;background:#17879b;border-radius:7.9px"></div>
<div class="r" style="left:535.00px;top:448.40px;width:10.60px;height:10.60px;background:#fff;border-radius:50%"></div>
<div class="t" style="left:568.50px;top:446.05px;font-size:16px;color:#777;font-weight:400;">Closed loop deceleration defined by CL_ACC</div>
<div class="r" style="left:921.00px;top:431.20px;width:396.30px;height:48.80px;border:1px solid #c8c8c8;border-radius:4px;box-sizing:border-box"></div>
<div class="t" style="left:930.50px;top:424.20px;font-size:12px;line-height:14px;padding:0 5px;background:#fff;color:#737373">Closed loop deceleration rate [CL_DEC]</div>
<div class="t" style="left:935.80px;top:447.85px;font-size:16px;color:#aaa;font-weight:400;">500</div>
<svg class="r" style="left:1292.30px;top:451.45px" width="13" height="7.5"><path d="M1 1 L6.5 6.5 L12 1" fill="none" stroke="#bbb" stroke-width="1.9"/></svg>
<div class="r" style="left:81.00px;top:516.20px;width:396.30px;height:48.80px;border:1px solid #c8c8c8;border-radius:4px;box-sizing:border-box"></div>
<div class="t" style="left:90.50px;top:509.20px;font-size:12px;line-height:14px;padding:0 5px;background:#fff;color:#737373">Kp coefficient for current Iq and Id loop [CURR_LOOP_KP]</div>
<div class="t" style="left:95.80px;top:532.85px;font-size:16px;color:#383838;font-weight:400;">0</div>
<div class="r" style="left:448.30px;top:529.20px;width:15.50px;height:21.50px;background:#f0f0f0"></div>
<svg class="r" style="left:448.30px;top:529.20px" width="15.5" height="21.5"><path d="M4.3 8.3 L7.75 4.3 L11.2 8.3Z M4.3 13.4 L7.75 17.3 L11.2 13.4Z" fill="#444"/></svg>
<div class="t" style="left:95.50px;top:570.64px;font-size:12px;color:#767676;font-weight:400;">Min Range: 0, Max Range: 255</div>
<div class="r" style="left:501.00px;top:516.20px;width:396.30px;height:48.80px;border:1px solid #c8c8c8;border-radius:4px;box-sizing:border-box"></div>
<div class="t" style="left:510.50px;top:509.20px;font-size:12px;line-height:14px;padding:0 5px;background:#fff;color:#737373">Ki coefficient for current Iq and Id loop [CURR_LOOP_KI]</div>
<div class="t" style="left:515.80px;top:532.85px;font-size:16px;color:#383838;font-weight:400;">0</div>
<div class="r" style="left:868.30px;top:529.20px;width:15.50px;height:21.50px;background:#f0f0f0"></div>
<svg class="r" style="left:868.30px;top:529.20px" width="15.5" height="21.5"><path d="M4.3 8.3 L7.75 4.3 L11.2 8.3Z M4.3 13.4 L7.75 17.3 L11.2 13.4Z" fill="#444"/></svg>
<div class="t" style="left:515.50px;top:570.64px;font-size:12px;color:#767676;font-weight:400;">Min Range: 0, Max Range: 255000</div>
<div class="r" style="left:921.00px;top:516.20px;width:396.30px;height:48.80px;border:1px solid #c8c8c8;border-radius:4px;box-sizing:border-box"></div>
<div class="t" style="left:930.50px;top:509.20px;font-size:12px;line-height:14px;padding:0 5px;background:#fff;color:#737373">Kp coefficient for speed loop [SPD_LOOP_KP]</div>
<div class="t" style="left:935.80px;top:532.85px;font-size:16px;color:#383838;font-weight:400;">0</div>
<div class="r" style="left:1288.30px;top:529.20px;width:15.50px;height:21.50px;background:#f0f0f0"></div>
<svg class="r" style="left:1288.30px;top:529.20px" width="15.5" height="21.5"><path d="M4.3 8.3 L7.75 4.3 L11.2 8.3Z M4.3 13.4 L7.75 17.3 L11.2 13.4Z" fill="#444"/></svg>
<div class="t" style="left:935.50px;top:570.64px;font-size:12px;color:#767676;font-weight:400;">Min Range: 0, Max Range: 2.55</div>
<div class="r" style="left:81.00px;top:624.00px;width:396.30px;height:48.80px;border:1px solid #c8c8c8;border-radius:4px;box-sizing:border-box"></div>
<div class="t" style="left:90.50px;top:617.00px;font-size:12px;line-height:14px;padding:0 5px;background:#fff;color:#737373">Ki coefficient for speed loop [SPD_LOOP_KI]</div>
<div class="t" style="left:95.80px;top:640.65px;font-size:16px;color:#383838;font-weight:400;">0</div>
<div class="r" style="left:448.30px;top:637.00px;width:15.50px;height:21.50px;background:#f0f0f0"></div>
<svg class="r" style="left:448.30px;top:637.00px" width="15.5" height="21.5"><path d="M4.3 8.3 L7.75 4.3 L11.2 8.3Z M4.3 13.4 L7.75 17.3 L11.2 13.4Z" fill="#444"/></svg>
<div class="t" style="left:95.50px;top:678.44px;font-size:12px;color:#767676;font-weight:400;">Min Range: 0, Max Range: 25.5</div>
<div class="r" style="left:501.00px;top:624.00px;width:396.30px;height:48.80px;border:1px solid #c8c8c8;border-radius:4px;box-sizing:border-box"></div>
<div class="t" style="left:510.50px;top:617.00px;font-size:12px;line-height:14px;padding:0 5px;background:#fff;color:#737373">Reference for Torque PI Loop (A) [ILIMIT]</div>
<div class="t" style="left:515.80px;top:640.65px;font-size:16px;color:#383838;font-weight:400;">60 %</div>
<svg class="r" style="left:872.30px;top:644.25px" width="13" height="7.5"><path d="M1 1 L6.5 6.5 L12 1" fill="none" stroke="#555" stroke-width="1.9"/></svg>
<div class="r" style="left:921.00px;top:624.00px;width:396.30px;height:48.80px;border:1px solid #c8c8c8;border-radius:4px;box-sizing:border-box"></div>
<div class="t" style="left:930.50px;top:617.00px;font-size:12px;line-height:14px;padding:0 5px;background:#fff;color:#737373">Flux Weakening Kp [FLUX_WEAKENING_KP]</div>
<div class="t" style="left:935.80px;top:640.65px;font-size:16px;color:#383838;font-weight:400;">1.6</div>
<div class="r" style="left:1288.30px;top:637.00px;width:15.50px;height:21.50px;background:#f0f0f0"></div>
<svg class="r" style="left:1288.30px;top:637.00px" width="15.5" height="21.5"><path d="M4.3 8.3 L7.75 4.3 L11.2 8.3Z M4.3 13.4 L7.75 17.3 L11.2 13.4Z" fill="#444"/></svg>
<div class="t" style="left:935.50px;top:678.44px;font-size:12px;color:#767676;font-weight:400;">Min Range: 0, Max Range: 25.5</div>
<div class="r" style="left:490.10px;top:606.90px;width:414.90px;height:73.90px;border:4px solid #ea0000;box-sizing:border-box"></div>
<div class="r" style="left:81.00px;top:731.50px;width:396.30px;height:48.80px;border:1px solid #c8c8c8;border-radius:4px;box-sizing:border-box"></div>
<div class="t" style="left:90.50px;top:724.50px;font-size:12px;line-height:14px;padding:0 5px;background:#fff;color:#737373">Flux Weakening Ki [FLUX_WEAKENING_KI]</div>
<div class="t" style="left:95.80px;top:748.15px;font-size:16px;color:#383838;font-weight:400;">160</div>
<div class="r" style="left:448.30px;top:744.50px;width:15.50px;height:21.50px;background:#f0f0f0"></div>
<svg class="r" style="left:448.30px;top:744.50px" width="15.5" height="21.5"><path d="M4.3 8.3 L7.75 4.3 L11.2 8.3Z M4.3 13.4 L7.75 17.3 L11.2 13.4Z" fill="#444"/></svg>
<div class="t" style="left:95.50px;top:785.94px;font-size:12px;color:#767676;font-weight:400;">Min Range: 0, Max Range: 2550</div>
<div class="r" style="left:501.00px;top:731.50px;width:396.30px;height:48.80px;border:1px solid #c8c8c8;border-radius:4px;box-sizing:border-box"></div>
<div class="t" style="left:510.50px;top:724.50px;font-size:12px;line-height:14px;padding:0 5px;background:#fff;color:#737373">Close loop acceleration when estimator is not yet fully aligned ( Hz /&hellip;</div>
<div class="t" style="left:515.80px;top:748.15px;font-size:16px;color:#383838;font-weight:400;">200</div>
<svg class="r" style="left:872.30px;top:751.75px" width="13" height="7.5"><path d="M1 1 L6.5 6.5 L12 1" fill="none" stroke="#555" stroke-width="1.9"/></svg>
<div class="r" style="left:921.00px;top:731.50px;width:396.30px;height:48.80px;border:1px solid #c8c8c8;border-radius:4px;box-sizing:border-box"></div>
<div class="t" style="left:930.50px;top:724.50px;font-size:12px;line-height:14px;padding:0 5px;background:#fff;color:#737373">Maximum Power [Maximum Power]</div>
<div class="t" style="left:935.80px;top:748.15px;font-size:16px;color:#383838;font-weight:400;">100</div>
<div class="r" style="left:1288.30px;top:744.50px;width:15.50px;height:21.50px;background:#f0f0f0"></div>
<svg class="r" style="left:1288.30px;top:744.50px" width="15.5" height="21.5"><path d="M4.3 8.3 L7.75 4.3 L11.2 8.3Z M4.3 13.4 L7.75 17.3 L11.2 13.4Z" fill="#444"/></svg>
<div class="t" style="left:935.50px;top:785.94px;font-size:12px;color:#767676;font-weight:400;">Min Range: 0, Max Range: 3070</div>
<div class="t" style="left:95.50px;top:832.84px;font-size:12px;color:#737373;font-weight:400;">Enable Maximum Torque Per Ampere Operation [MTPA_EN]</div>
<div class="r" style="left:96.20px;top:854.00px;width:32.00px;height:15.80px;background:#555;border-radius:7.9px"></div>
<div class="r" style="left:98.80px;top:856.60px;width:10.60px;height:10.60px;background:#fff;border-radius:50%"></div>
<div class="t" style="left:148.50px;top:854.25px;font-size:16px;color:#777;font-weight:400;">MTPA disabled</div>
<div class="t" style="left:515.50px;top:832.84px;font-size:12px;color:#737373;font-weight:400;">Response_to_change_of_DIR_pin_status [DIR_CHANGE_MODE]</div>
<div class="r" style="left:516.20px;top:854.00px;width:32.00px;height:15.80px;background:#17879b;border-radius:7.9px"></div>
<div class="r" style="left:535.00px;top:856.60px;width:10.60px;height:10.60px;background:#fff;border-radius:50%"></div>
<div class="t" style="left:568.50px;top:854.25px;font-size:16px;color:#777;font-weight:400;">Change the direction through Reverse Drive</div>
<div class="t" style="left:568.50px;top:878.25px;font-size:16px;color:#777;font-weight:400;">while continuously driving the motor</div>
<div class="r" style="left:921.00px;top:839.00px;width:396.30px;height:48.80px;border:1px solid #c8c8c8;border-radius:4px;box-sizing:border-box"></div>
<div class="t" style="left:930.50px;top:832.00px;font-size:12px;line-height:14px;padding:0 5px;background:#fff;color:#737373">FLUX WEAKENING REFERENCE [FLUX_WEAKENING_REFERE...</div>
<div class="t" style="left:935.80px;top:855.65px;font-size:16px;color:#383838;font-weight:400;">95%</div>
<svg class="r" style="left:1292.30px;top:859.25px" width="13" height="7.5"><path d="M1 1 L6.5 6.5 L12 1" fill="none" stroke="#555" stroke-width="1.9"/></svg>
<div class="r" style="left:81.00px;top:933.30px;width:396.30px;height:48.80px;border:1px solid #c8c8c8;border-radius:4px;box-sizing:border-box"></div>
<div class="t" style="left:90.50px;top:926.30px;font-size:12px;line-height:14px;padding:0 5px;background:#fff;color:#737373">Control mode [CTRL_MODE]</div>
<div class="t" style="left:95.80px;top:949.95px;font-size:16px;color:#383838;font-weight:400;">Speed Control</div>
<svg class="r" style="left:452.30px;top:953.55px" width="13" height="7.5"><path d="M1 1 L6.5 6.5 L12 1" fill="none" stroke="#555" stroke-width="1.9"/></svg>
<div class="r" style="left:1361.80px;top:606.00px;width:5.80px;height:465.00px;background:#0d2b3a;border-radius:3px"></div>
<div class="r" style="left:1390.00px;top:58.00px;width:1.60px;height:1022.00px;background:#dedede"></div>
<div class="r" style="left:1381.00px;top:85.30px;width:20.00px;height:20.00px;background:#fff;border-radius:50%;box-shadow:0 1px 3px rgba(0,0,0,0.18)"></div>
<svg class="r" style="left:1386px;top:89px" width="12" height="13"><path d="M3.5 1.5 L8.5 6.5 L3.5 11.5" fill="none" stroke="#555" stroke-width="1.6"/></svg>
<div class="r" style="left:1402.00px;top:69.00px;width:511.00px;height:53.60px;background:#ececee;border-radius:10px"></div>
<div class="r" style="left:1405.40px;top:72.40px;width:129.00px;height:47.00px;background:#fff;border-radius:10px;box-shadow:0 2px 4px rgba(0,0,0,0.12)"></div>
<div class="t" style="left:1437.50px;top:86.75px;font-size:16px;color:#111;font-weight:700;">Controls</div>
<div class="t" style="left:1560.00px;top:86.75px;font-size:16px;color:#111;font-weight:700;">Faults</div>
<div class="r" style="left:1611.70px;top:86.60px;width:18.00px;height:18.00px;background:#dcdcdc;border-radius:50%"></div>
<div class="r" style="left:1614.70px;top:89.60px;width:12.00px;height:12.00px;background:#b4b4b4;border-radius:50%"></div>
<div class="t" style="left:1696.00px;top:86.75px;font-size:16px;color:#111;font-weight:700;">Charts</div>
<div class="t" style="left:1827.50px;top:86.75px;font-size:16px;color:#111;font-weight:700;">Logs</div>
<div class="r" style="left:1404.00px;top:133.30px;width:507.50px;height:255.00px;background:#fff;border:1px solid #e6e6e6;border-radius:6px;box-sizing:border-box"></div>
<div class="t" style="left:1415.70px;top:149.56px;font-size:20.6px;color:#111;font-weight:700;">I2C CONTROLS</div>
<svg class="r" style="left:1882.50px;top:156.75px" width="13" height="7.5"><path d="M1 6.5 L6.5 1 L12 6.5" fill="none" stroke="#999" stroke-width="1.8"/></svg>
<div class="t" style="left:1415.60px;top:188.95px;font-size:16px;color:#333;font-weight:400;">Speed Control via I2C</div>
<div class="r" style="left:1622.00px;top:190.20px;width:28.00px;height:13.60px;background:#17879b;border-radius:6.8px"></div>
<div class="r" style="left:1639.00px;top:192.80px;width:8.40px;height:8.40px;background:#fff;border-radius:50%"></div>
<div class="t" style="left:1656.00px;top:189.05px;font-size:16px;color:#333;font-weight:400;">Enabled</div>
<div class="t" style="left:1415.60px;top:222.58px;font-size:16.8px;color:#aaa;font-weight:400;">I2C Target Address (GUI side)</div>
<svg class="r" style="left:1651px;top:224px" width="25" height="25"><circle cx="12.3" cy="12.25" r="10.6" fill="none" stroke="#1c7d8e" stroke-width="2"/><circle cx="12.3" cy="7.6" r="1.4" fill="#1c7d8e"/><rect x="11.2" y="10.2" width="2.2" height="7.2" fill="#1c7d8e"/></svg>
<div class="r" style="left:1415.00px;top:258.75px;width:339.30px;height:30.60px;border:1px solid #dcdcdc;border-radius:4px;box-sizing:border-box"></div>
<div class="t" style="left:1421.00px;top:265.63px;font-size:15.5px;color:#aaa;font-weight:400;">0x0</div>
<div class="r" style="left:1765.40px;top:258.00px;width:135.40px;height:31.70px;border:1.5px solid #1c7d8e;border-radius:4px;box-sizing:border-box"></div>
<div class="t" style="left:1789.70px;top:266.10px;font-size:15px;color:#2a7d8c;font-weight:400;">Find Address</div>
<div class="t" style="left:1415.60px;top:303.70px;font-size:16px;color:#333;font-weight:400;">I2C Speed Command Percentage (%)</div>
<div class="r" style="left:1415.00px;top:328.10px;width:343.50px;height:9.60px;border:1px solid #dcdcdc;border-radius:5px;box-sizing:border-box;background:#fff"></div>
<div class="r" style="left:1405.10px;top:322.00px;width:21.00px;height:21.00px;background:#fff;border:1px solid #cfcfcf;border-radius:50%;box-sizing:border-box;box-shadow:0 1px 2px rgba(0,0,0,0.2)"></div>
<div class="r" style="left:1784.40px;top:321.25px;width:116.10px;height:27.00px;border:1px solid #dcdcdc;border-radius:3px;box-sizing:border-box"></div>
<div class="t" style="left:1791.00px;top:326.15px;font-size:16px;color:#aaa;font-weight:400;">0.00</div>
<div class="r" style="left:1880.00px;top:325.50px;width:14.60px;height:19.00px;background:#efefef"></div>
<svg class="r" style="left:1880px;top:325.5px" width="14.6" height="19"><path d="M4 7.3 L7.3 3.8 L10.6 7.3Z M4 11.7 L7.3 15.2 L10.6 11.7Z" fill="#444"/></svg>
<div class="t" style="left:1415.60px;top:350.45px;font-size:16px;color:#222;font-weight:400;">0%</div>
<div class="t" style="left:1489.40px;top:350.45px;font-size:16px;color:#222;font-weight:400;">25%</div>
<div class="t" style="left:1573.00px;top:350.45px;font-size:16px;color:#222;font-weight:400;">50%</div>
<div class="t" style="left:1656.50px;top:350.45px;font-size:16px;color:#222;font-weight:400;">75%</div>
<div class="t" style="left:1741.80px;top:350.45px;font-size:16px;color:#222;font-weight:400;">100%</div>
<div class="r" style="left:1404.00px;top:399.70px;width:507.30px;height:608.30px;background:#fff;border:1px solid #e6e6e6;border-radius:6px;box-sizing:border-box"></div>
<div class="t" style="left:1410.80px;top:409.66px;font-size:20.6px;color:#111;font-weight:700;">MOTOR STATUS</div>
<div class="t" style="left:1654.60px;top:412.23px;font-size:15.2px;color:#aaa;font-weight:400;">Auto Read Motor Status</div>
<div class="r" style="left:1822.30px;top:414.10px;width:27.70px;height:13.60px;background:#555;border-radius:6.8px"></div>
<div class="r" style="left:1824.90px;top:416.70px;width:8.40px;height:8.40px;background:#fff;border-radius:50%"></div>
<div class="t" style="left:1855.50px;top:412.40px;font-size:15px;color:#aaa;font-weight:400;">Disable</div>
<div class="r" style="left:1409.50px;top:445.20px;width:496.20px;height:43.80px;border:1px solid #e0e0e0;box-sizing:border-box"></div>
<div class="t" style="left:1416.25px;top:458.75px;font-size:16px;color:#aaa;font-weight:400;">Status Select</div>
<svg class="r" style="left:1882.75px;top:458.68px" width="12.5" height="7.25"><path d="M1 1 L6.25 6.25 L11.5 1" fill="none" stroke="#555" stroke-width="1.8"/></svg>
<div class="r" style="left:1409.50px;top:511.10px;width:238.00px;height:64.70px;border:1px solid #e4e4e4;border-radius:4px;box-sizing:border-box"></div>
<div class="t" style="left:1416.10px;top:526.43px;font-size:15.2px;color:#999;font-weight:400;">Algorithm State</div>
<div class="t" style="left:1416.10px;top:547.84px;font-size:13.3px;color:#1c7d8e;font-weight:700;">MOTOR_IDLE</div>
<div class="r" style="left:1668.20px;top:511.10px;width:238.00px;height:64.70px;border:1px solid #e4e4e4;border-radius:4px;box-sizing:border-box"></div>
<div class="t" style="left:1674.80px;top:526.43px;font-size:15.2px;color:#999;font-weight:400;">VM Voltage</div>
<div class="t" style="left:1674.80px;top:547.84px;font-size:13.3px;color:#1c7d8e;font-weight:700;">0.0000 V</div>
<div class="r" style="left:1409.50px;top:580.70px;width:238.00px;height:64.70px;border:1px solid #e4e4e4;border-radius:4px;box-sizing:border-box"></div>
<div class="t" style="left:1416.10px;top:596.03px;font-size:15.2px;color:#999;font-weight:400;">Reference for Speed Loop</div>
<div class="t" style="left:1416.10px;top:617.44px;font-size:13.3px;color:#1c7d8e;font-weight:700;">0.0000 Hz</div>
<div class="r" style="left:1668.20px;top:580.70px;width:238.00px;height:64.70px;border:1px solid #e4e4e4;border-radius:4px;box-sizing:border-box"></div>
<div class="t" style="left:1674.80px;top:596.03px;font-size:15.2px;color:#999;font-weight:400;">Speed FDBK</div>
<div class="t" style="left:1674.80px;top:617.44px;font-size:13.3px;color:#1c7d8e;font-weight:700;">0.0000 Hz</div>
<div class="r" style="left:1404.00px;top:1020.30px;width:507.40px;height:48.00px;background:#fff;border:1px solid #e6e6e6;border-radius:6px;box-sizing:border-box"></div>
<div class="t" style="left:1415.70px;top:1034.06px;font-size:20.6px;color:#111;font-weight:700;">EEPROM Controls</div>
<div class="r" style="left:1798.20px;top:1025.70px;width:102.30px;height:37.10px;border:1.5px solid #c8102e;border-radius:4px;box-sizing:border-box"></div>
<div class="t" style="left:1807.60px;top:1038.36px;font-size:13.75px;color:#c8102e;font-weight:400;">EEPROM</div>
<svg class="r" style="left:1875px;top:1041px" width="10" height="6"><path d="M0.5 0.5 L9.5 0.5 L5 5.5Z" fill="#c8102e"/></svg>
<svg class="r" style="left:14.00px;top:73.80px" width="21.6" height="21.6" viewBox="0 0 24 24"><path fill="#6b6b6b" d="M12 5.69l5 4.5V18h-2v-6H9v6H7v-7.81l5-4.5M12 3L2 12h3v8h6v-6h2v6h6v-8h3L12 3z" transform="translate(0,0.5)"/></svg>
<svg class="r" style="left:13.00px;top:123.20px" width="24" height="24" viewBox="0 0 24 24"><path fill="#6b6b6b" d="M12 2C6.48 2 2 6.48 2 12s4.48 10 10 10 10-4.48 10-10S17.52 2 12 2zm7.46 7.12l-2.78 1.15c-.51-1.36-1.58-2.44-2.95-2.94l1.15-2.78c2.1.8 3.77 2.47 4.58 4.57zM12 15c-1.66 0-3-1.34-3-3s1.34-3 3-3 3 1.34 3 3-1.34 3-3 3zM9.13 4.54l1.17 2.78c-1.38.5-2.47 1.59-2.98 2.97L4.54 9.13c.81-2.11 2.48-3.78 4.59-4.59zM4.54 14.87l2.78-1.15c.51 1.38 1.59 2.46 2.97 2.96l-1.17 2.78c-2.1-.81-3.77-2.48-4.58-4.59zm10.34 4.59l-1.15-2.78c1.37-.51 2.45-1.59 2.95-2.97l2.78 1.17c-.81 2.1-2.48 3.77-4.58 4.58z"/></svg>
<svg class="r" style="left:13.00px;top:173.00px" width="24" height="24" viewBox="0 0 24 24"><path fill="#6b6b6b" d="M3 17v2h6v-2H3zM3 5v2h10V5H3zm10 16v-2h8v-2h-8v-2h-2v6h2zM7 9v2H3v2h4v2h2V9H7zm14 4v-2H11v2h10zm-6-4h2V7h4V5h-4V3h-2v6z"/></svg>
<svg class="r" style="left:13.00px;top:223.10px" width="24" height="24" viewBox="0 0 24 24"><circle cx="12" cy="12" r="6.3" fill="#fff" stroke="#6b6b6b" stroke-width="1.4"/><path d="M9.6 9.6 L14.4 14.4 M14.4 9.6 L9.6 14.4" stroke="#cfcfcf" stroke-width="1.3"/><circle cx="8.8" cy="8.8" r="1.5" fill="#6b6b6b"/><circle cx="15.2" cy="8.8" r="1.5" fill="#6b6b6b"/><circle cx="8.8" cy="15.2" r="1.5" fill="#6b6b6b"/><circle cx="15.2" cy="15.2" r="1.5" fill="#6b6b6b"/><path d="M12.3 1.7 A10.3 10.3 0 0 1 22.3 10.6" fill="none" stroke="#6b6b6b" stroke-width="1.4"/><path d="M1.7 13.3 A10.3 10.3 0 0 0 11.6 22.3" fill="none" stroke="#6b6b6b" stroke-width="1.4"/><polygon points="11.6,1.5 16.6,1.1 16.3,3.7" fill="#6b6b6b"/><polygon points="12.4,22.5 7.4,22.9 7.7,20.3" fill="#6b6b6b"/></svg>
<svg class="r" style="left:13.00px;top:273.00px" width="24" height="24" viewBox="0 0 24 24"><rect x="3.8" y="3.8" width="16.4" height="16.4" rx="1.5" fill="none" stroke="#6b6b6b" stroke-width="1.9"/><rect x="7.3" y="13.2" width="2" height="3.5" fill="#6b6b6b"/><rect x="11" y="11" width="2" height="5.7" fill="#6b6b6b"/><rect x="14.7" y="7.5" width="2" height="9.2" fill="#6b6b6b"/></svg>
<svg class="r" style="left:13.00px;top:323.00px" width="24" height="24" viewBox="0 0 24 24"><polygon points="15.50,8.80 15.37,10.09 13.52,10.71 13.06,11.58 13.57,13.47 12.57,14.29 10.81,13.42 9.88,13.70 8.90,15.40 7.61,15.27 6.99,13.42 6.12,12.96 4.23,13.47 3.41,12.47 4.28,10.71 4.00,9.78 2.30,8.80 2.43,7.51 4.28,6.89 4.74,6.02 4.23,4.13 5.23,3.31 6.99,4.18 7.92,3.90 8.90,2.20 10.19,2.33 10.81,4.18 11.68,4.64 13.57,4.13 14.39,5.13 13.52,6.89 13.80,7.82" fill="#1c7d8e"/><circle cx="8.9" cy="8.8" r="2.1" fill="#fff"/><polygon points="22.10,17.20 22.02,18.02 20.86,18.42 20.56,18.98 20.87,20.17 20.23,20.69 19.12,20.16 18.52,20.34 17.90,21.40 17.08,21.32 16.68,20.16 16.12,19.86 14.93,20.17 14.41,19.53 14.94,18.42 14.76,17.82 13.70,17.20 13.78,16.38 14.94,15.98 15.24,15.42 14.93,14.23 15.57,13.71 16.68,14.24 17.28,14.06 17.90,13.00 18.72,13.08 19.12,14.24 19.68,14.54 20.87,14.23 21.39,14.87 20.86,15.98 21.04,16.58" fill="#1c7d8e"/><circle cx="17.9" cy="17.2" r="1.4" fill="#fff"/></svg>
<svg class="r" style="left:13.00px;top:373.20px" width="24" height="24" viewBox="0 0 24 24"><rect x="3" y="3.3" width="16" height="17.4" rx="1" fill="none" stroke="#6b6b6b" stroke-width="1.8"/><rect x="6" y="6.3" width="4.4" height="5.4" fill="#6b6b6b"/><rect x="11.6" y="6.3" width="4.4" height="3" fill="#6b6b6b"/><rect x="6" y="12.7" width="4.4" height="5" fill="#6b6b6b"/><rect x="11.6" y="10.4" width="4.4" height="7.3" fill="#6b6b6b"/><rect x="19.5" y="7" width="2" height="1.6" fill="#6b6b6b"/><rect x="19.5" y="11.2" width="2" height="1.6" fill="#6b6b6b"/><rect x="19.5" y="15.4" width="2" height="1.6" fill="#6b6b6b"/></svg>
<svg class="r" style="left:13.00px;top:942.60px" width="24" height="24" viewBox="0 0 24 24"><path d="M6.2 6.8 L11.4 12 L6.2 17.2 M12.6 6.8 L17.8 12 L12.6 17.2" fill="none" stroke="#6b6b6b" stroke-width="1.9"/></svg>
<svg class="r" style="left:13.00px;top:1012.10px" width="24" height="24" viewBox="0 0 24 24"><path fill="#c0102a" d="M3.9 12c0-1.71 1.39-3.1 3.1-3.1h4V7H7c-2.76 0-5 2.24-5 5s2.24 5 5 5h4v-1.9H7c-1.71 0-3.1-1.39-3.1-3.1zM8 13h8v-2H8v2zm9-6h-4v1.9h4c1.71 0 3.1 1.39 3.1 3.1s-1.39 3.1-3.1 3.1h-4V17h4c2.76 0 5-2.24 5-5s-2.24-5-5-5z"/></svg>
</body></html>
